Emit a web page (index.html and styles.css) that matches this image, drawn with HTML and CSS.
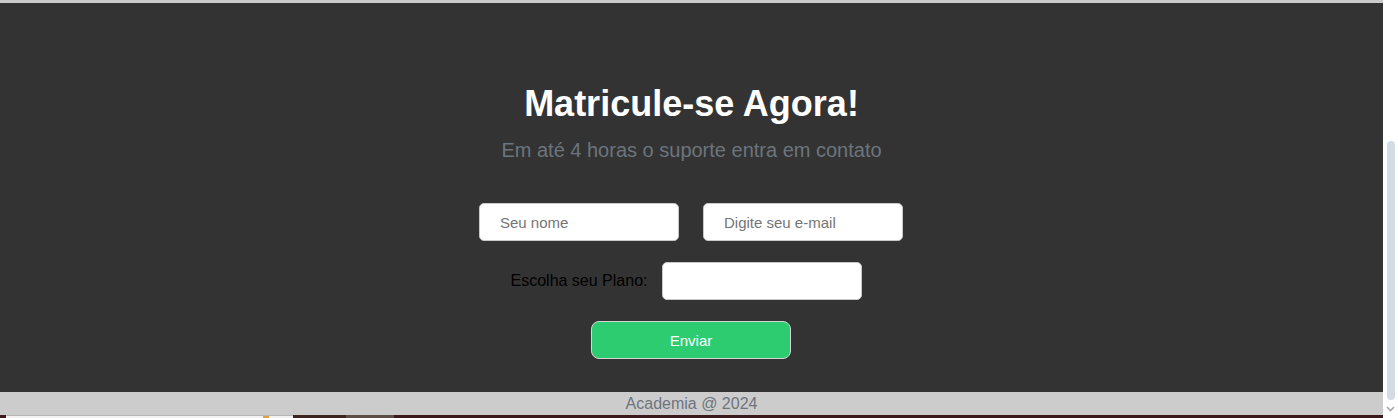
FILE: index.html
```html
<!DOCTYPE html>
<html lang="pt-BR">
<head>
<meta charset="utf-8">
<title>Matricule-se Agora!</title>
<link rel="stylesheet" href="styles.css">
</head>
<body>
<div class="page">
  <div class="main">
    <div class="top-strip"></div>
    <section class="signup">
      <h1 class="title">Matricule-se Agora!</h1>
      <p class="subtitle">Em até 4 horas o suporte entra em contato</p>
      <form class="form">
        <div class="row">
          <input class="field" type="text" placeholder="Seu nome">
          <input class="field" type="email" placeholder="Digite seu e-mail">
        </div>
        <div class="row row-plan">
          <label class="label">Escolha seu Plano:</label>
          <input class="field" type="text">
        </div>
        <div class="row">
          <button class="submit" type="button">Enviar</button>
        </div>
      </form>
    </section>
    <footer class="footer">Academia @ 2024</footer>
    <div class="next-strip">
      <div class="ns ns-red"></div>
      <div class="ns ns-white"><span class="ns-dot"></span></div>
      <div class="ns ns-brown"></div>
      <div class="ns ns-taupe"></div>
      <div class="ns ns-rest"></div>
    </div>
  </div>
  <div class="scrollbar">
    <div class="thumb"></div>
    <svg class="arrow" width="9" height="6" viewBox="0 0 9 6"><path d="M1 1 L4.5 4.5 L8 1" fill="none" stroke="#a8a8a8" stroke-width="1.6"/></svg>
  </div>
</div>
</body>
</html>
```

FILE: styles.css
```css
html, body {
  margin: 0;
  padding: 0;
  height: 418px;
  overflow: hidden;
  font-family: "Liberation Sans", Arial, sans-serif;
}

.page {
  display: flex;
  width: 1398px;
  height: 418px;
}

.main {
  flex: 1;
  display: flex;
  flex-direction: column;
}

.top-strip {
  height: 3px;
  background: #cbcbcb;
}

.signup {
  height: 389px;
  box-sizing: border-box;
  background: #333333;
  padding-top: 80px;
  display: flex;
  flex-direction: column;
  align-items: center;
}

.title {
  margin: 0;
  font-size: 36px;
  line-height: 41px;
  font-weight: bold;
  color: #ffffff;
}

.subtitle {
  margin: 15px 0 0;
  font-size: 20px;
  line-height: 23px;
  color: #6c757d;
}

.form {
  margin-top: 41px;
  padding-right: 1px;
  display: flex;
  flex-direction: column;
  gap: 21px;
}

.row {
  display: flex;
  justify-content: center;
  align-items: center;
  gap: 24px;
}

.row-plan {
  gap: 15px;
  padding-right: 9px;
}

.field {
  width: 200px;
  height: 38px;
  box-sizing: border-box;
  border: 1px solid #c8c8c8;
  border-radius: 5px;
  background: #ffffff;
  padding: 0 20px;
  font-family: "Liberation Sans", Arial, sans-serif;
  font-size: 15px;
  color: #333;
  outline: none;
}

.field::placeholder {
  color: #757575;
}

.label {
  font-size: 16px;
  color: #000000;
}

.submit {
  width: 200px;
  height: 38px;
  box-sizing: border-box;
  border: 1px solid #d6d6d6;
  border-radius: 8px;
  background: #2ecc71;
  color: #ffffff;
  font-family: "Liberation Sans", Arial, sans-serif;
  font-size: 15px;
  cursor: pointer;
}

.footer {
  height: 23px;
  line-height: 23px;
  background: #cccccc;
  color: #6c757d;
  font-size: 16px;
  text-align: center;
}

.next-strip {
  height: 3px;
  display: flex;
}

.ns-red {
  width: 6px;
  background: #3e1a1c;
}

.ns-white {
  width: 287px;
  background: #f2f2f2;
  border-top: 1px solid #b8b8b8;
  box-sizing: border-box;
  display: flex;
  justify-content: flex-end;
  padding-right: 24px;
}

.ns-dot {
  width: 6px;
  background: #e0a040;
}

.ns-brown {
  width: 53px;
  background: #3c2420;
}

.ns-taupe {
  width: 48px;
  background: #5e4e48;
}

.ns-rest {
  flex: 1;
  background: #3a1a1c;
}

.scrollbar {
  width: 15px;
  background: #ffffff;
  display: flex;
  flex-direction: column;
  align-items: center;
}

.thumb {
  margin-top: 141px;
  width: 8px;
  height: 259px;
  border-radius: 4px;
  background: #d3dce4;
}

.arrow {
  margin-top: 6px;
}
```
